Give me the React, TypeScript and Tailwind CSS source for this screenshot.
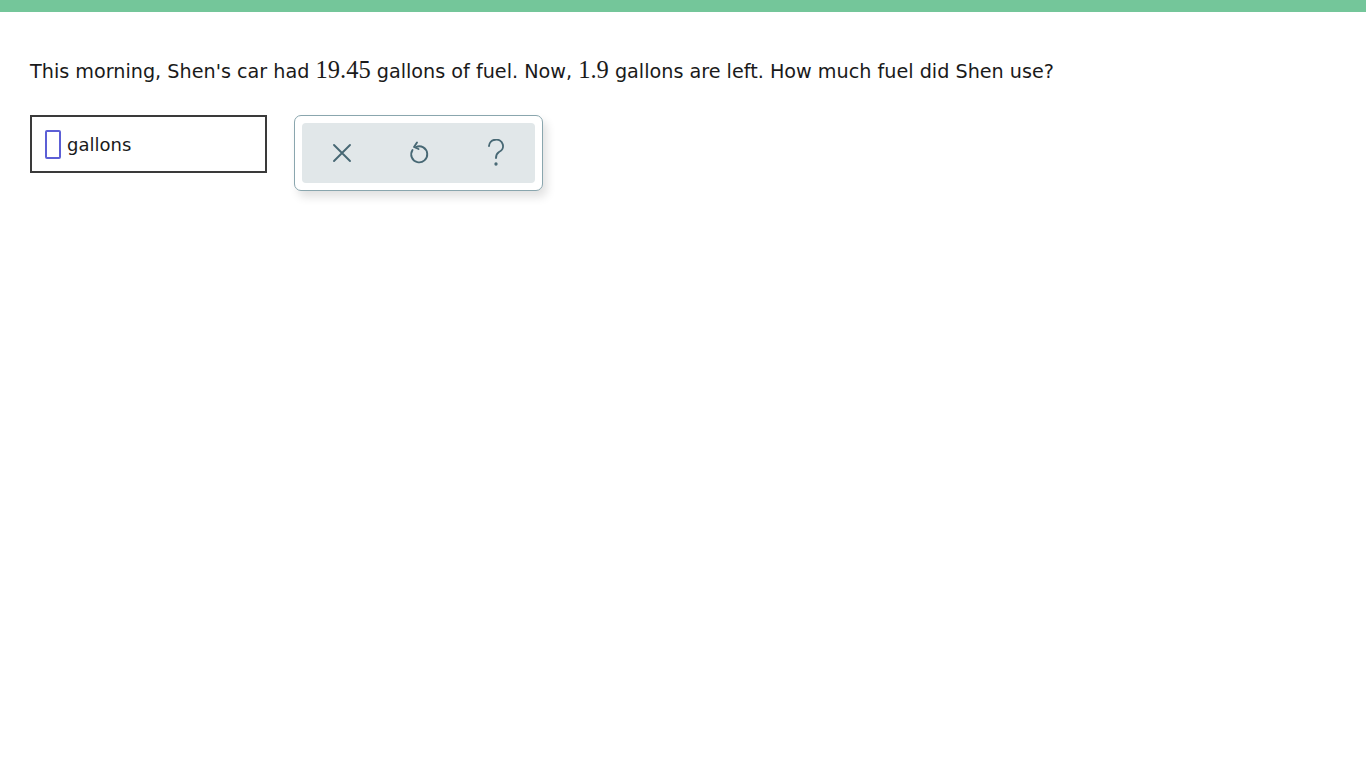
export default function App() {
    return (
        <div className="min-h-screen w-full bg-white" style={{ fontFamily: '"DejaVu Sans", Verdana, sans-serif' }}>
            <div className="h-[12px] w-full bg-[#74c69a]" />
            <div className="px-[30px] pt-[46px]">
                <p className="text-[19.2px] leading-[28px] text-[#1a1a1a]">
                    This morning, Shen's car had{" "}
                    <span className="text-[24.5px] leading-none" style={{ fontFamily: '"Liberation Serif", serif' }}>19.45</span> gallons of fuel. Now,{" "}
                    <span className="text-[24.5px] leading-none" style={{ fontFamily: '"Liberation Serif", serif' }}>1.9</span> gallons are left. How much fuel did Shen use?
                </p>
                <div className="mt-[29px] flex items-start gap-[27px]">
                    <div className="flex h-[58px] w-[237px] items-center border-2 border-[#3a3a3a] pl-[13px]">
                        <div className="h-[29px] w-[16px] rounded-[2px] border-2 border-[#5c5fd6]" />
                        <span className="ml-[6px] text-[18px] text-[#1a1a1a]">gallons</span>
                    </div>
                    <div className="rounded-[7px] border border-[#8aa6ae] bg-white p-[7px] shadow-[4px_6px_10px_rgba(0,0,0,0.12)]">
                        <div className="flex h-[60px] w-[233px] items-center justify-center gap-[56px] rounded-[4px] bg-[#e1e7e9] text-[#476874]">
                            <svg width="20" height="20" viewBox="0 0 20 20" fill="none" stroke="currentColor" strokeWidth="1.9" strokeLinecap="round">
                                <path d="M2 2 L18 18 M18 2 L2 18" />
                            </svg>
                            <svg width="22" height="24" viewBox="0 0 22 24" fill="none" stroke="currentColor" strokeWidth="1.9" strokeLinecap="round" strokeLinejoin="round">
                                <path d="M8 6 A8 8 0 1 1 4.5 9" />
                                <path d="M9 1.5 L6 6 L10.5 8" />
                            </svg>
                            <svg width="20" height="28" viewBox="0 0 20 28" fill="none" stroke="currentColor" strokeWidth="1.9" strokeLinecap="round">
                                <path d="M3 7 A7 6.5 0 1 1 13 13 Q10 15 10 19" />
                                <circle cx="10" cy="25" r="0.7" fill="currentColor" />
                            </svg>
                        </div>
                    </div>
                </div>
            </div>
        </div>
    );
}
